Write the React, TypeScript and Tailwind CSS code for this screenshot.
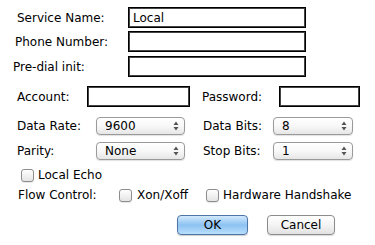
import React from 'react';

const font = { fontFamily: '"DejaVu Sans", "Liberation Sans", sans-serif' };

const TextBox = ({ value = '', w }: { value?: string; w: string }) => (
  <div className={`${w} h-[21px] border border-black shadow-[inset_0_0_0_1px_#444] bg-white flex items-center pl-[4px] text-[12px]`}>
    {value}
  </div>
);

const Arrows = () => (
  <svg width="6" height="10" viewBox="0 0 6 10" className="shrink-0">
    <path d="M3 0.5 L5.5 4 L0.5 4 Z" fill="#555" />
    <path d="M3 9.5 L5.5 6 L0.5 6 Z" fill="#555" />
  </svg>
);

const Select = ({ value, w }: { value: string; w: string }) => (
  <div className={`${w} h-[18px] rounded-[4px] border border-[#9a9a9a] bg-gradient-to-b from-white via-[#f8f8f8] to-[#e6e6e6] flex items-center justify-between pl-[8px] pr-[5px] text-[12px] shadow-[0_1px_1px_rgba(0,0,0,0.12)]`}>
    <span>{value}</span>
    <Arrows />
  </div>
);

const Check = () => (
  <div className="w-[13px] h-[13px] rounded-[3px] border border-[#8d8d8d] bg-gradient-to-b from-white to-[#e4e4e4] shadow-[0_1px_1px_rgba(0,0,0,0.1)] shrink-0" />
);

export default function App() {
  return (
    <div className="w-[375px] h-[245px] bg-white text-black overflow-hidden" style={font}>
      {/* service fields */}
      <div className="mt-[7px] h-[21px] flex items-center">
        <span className="w-[128px] pl-[17px] text-[12px]">Service Name:</span>
        <TextBox value="Local" w="w-[178px]" />
      </div>
      <div className="mt-[3px] h-[21px] flex items-center">
        <span className="w-[128px] pl-[15px] text-[12px]">Phone Number:</span>
        <TextBox w="w-[178px]" />
      </div>
      <div className="mt-[4px] h-[21px] flex items-center">
        <span className="w-[128px] pl-[13px] text-[12px]">Pre-dial init:</span>
        <TextBox w="w-[178px]" />
      </div>

      {/* account */}
      <div className="mt-[9px] h-[21px] flex items-center">
        <span className="w-[87px] pl-[17px] text-[12px]">Account:</span>
        <TextBox w="w-[103px]" />
        <span className="w-[89px] pl-[12px] text-[12px]">Password:</span>
        <TextBox w="w-[81px]" />
      </div>

      {/* serial settings */}
      <div className="mt-[10px] h-[18px] flex items-center">
        <span className="w-[96px] pl-[17px] text-[12px]">Data Rate:</span>
        <Select value="9600" w="w-[89px]" />
        <span className="w-[88px] pl-[18px] text-[12px]">Data Bits:</span>
        <Select value="8" w="w-[80px]" />
      </div>
      <div className="mt-[7px] h-[18px] flex items-center">
        <span className="w-[96px] pl-[17px] text-[12px]">Parity:</span>
        <Select value="None" w="w-[89px]" />
        <span className="w-[88px] pl-[18px] text-[12px]">Stop Bits:</span>
        <Select value="1" w="w-[80px]" />
      </div>

      <div className="mt-[7px] h-[16px] flex items-center pl-[21px] gap-[4px] text-[12px]">
        <Check />
        <span>Local Echo</span>
      </div>

      <div className="mt-[4px] h-[16px] flex items-center text-[12px]">
        <span className="w-[119px] pl-[18px]">Flow Control:</span>
        <Check />
        <span className="w-[74px] pl-[5px]">Xon/Xoff</span>
        <Check />
        <span className="pl-[4px]">Hardware Handshake</span>
      </div>

      {/* buttons */}
      <div className="mt-[12px] flex pl-[177px] gap-[19px] text-[12px]">
        <button className="w-[71px] h-[20px] rounded-[4px] border border-[#4f74a6] bg-gradient-to-b from-[#d3e9fc] via-[#8cc2f2] to-[#b9defc] shadow-[0_1px_1px_rgba(0,0,0,0.2)] flex items-center justify-center">
          OK
        </button>
        <button className="w-[68px] h-[20px] rounded-[4px] border border-[#8c8c8c] bg-gradient-to-b from-white via-[#f4f4f4] to-[#e2e2e2] shadow-[0_1px_1px_rgba(0,0,0,0.15)] flex items-center justify-center">
          Cancel
        </button>
      </div>
    </div>
  );
}
